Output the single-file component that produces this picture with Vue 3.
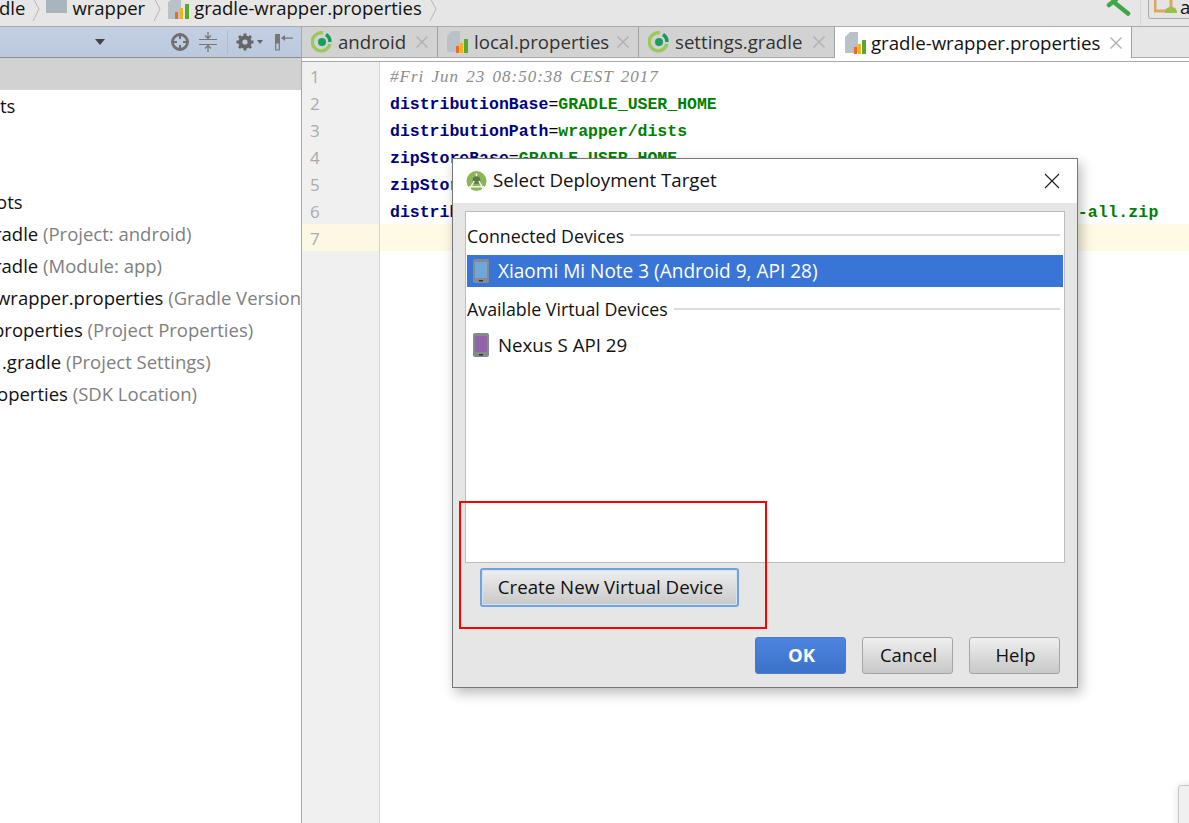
<script setup>
const tabs = [
  { name: 'android', icon: 'gradle', w: 136 },
  { name: 'local.properties', icon: 'props', w: 201 },
  { name: 'settings.gradle', icon: 'gradle', w: 196 },
  { name: 'gradle-wrapper.properties', icon: 'props', w: 297, active: true }
]
const tree = [
  { t: 'ts', off: 0 }, { t: '', off: 0 }, { t: '', off: 0 },
  { t: 'ots', off: -4 },
  { t: 'radle', h: '(Project: android)', off: -6 },
  { t: 'radle', h: '(Module: app)', off: -6 },
  { t: 'wrapper.properties', h: '(Gradle Version)', off: -4 },
  { t: 'properties', h: '(Project Properties)', off: -7 },
  { t: '.gradle', h: '(Project Settings)', off: 2 },
  { t: 'operties', h: '(SDK Location)', off: -3 }
]
const code = [
  [{ c: 'cm', t: '#Fri Jun 23 08:50:38 CEST 2017' }],
  [{ c: 'k', t: 'distributionBase' }, { c: 'e', t: '=' }, { c: 'v', t: 'GRADLE_USER_HOME' }],
  [{ c: 'k', t: 'distributionPath' }, { c: 'e', t: '=' }, { c: 'v', t: 'wrapper/dists' }],
  [{ c: 'k', t: 'zipStoreBase' }, { c: 'e', t: '=' }, { c: 'v', t: 'GRADLE_USER_HOME' }],
  [{ c: 'k', t: 'zipStorePath' }, { c: 'e', t: '=' }, { c: 'v', t: 'wrapper/dists' }],
  [{ c: 'k', t: 'distributionUrl' }, { c: 'e', t: '=' }, { c: 'v url', t: 'https\\://services.gradle.org/distributions/gradle-4.10' }, { c: 'v tail', t: '-all.zip' }],
  []
]
</script>

<template>
  <div class="app">
    <header class="crumbs">
      <span class="crumb clip">dle</span>
      <svg class="chev c1" width="9" height="24" viewBox="0 0 9 24"><path d="M1 0l6 11-6 12" fill="none" stroke="#b5b5b5"/></svg>
      <svg class="folder" width="21" height="16" viewBox="0 0 21 16"><path d="M0 0h21v16H0z" fill="#aab4bd"/></svg>
      <span class="crumb">wrapper</span>
      <svg class="chev c2" width="9" height="24" viewBox="0 0 9 24"><path d="M1 0l6 11-6 12" fill="none" stroke="#b5b5b5"/></svg>
      <svg class="pi" width="22" height="21" viewBox="0 0 22 21">
        <path d="M0 3l4-3h9v20H0z" fill="#b9c2c9"/><path d="M7 13h3v7H7z" fill="#ee6c1f"/><path d="M12 9h3v11h-3z" fill="#f4b41e"/><path d="M17 5h4v15h-4z" fill="#5aa82d"/>
      </svg>
      <span class="crumb">gradle-wrapper.properties</span>
      <svg class="chev c1" width="9" height="24" viewBox="0 0 9 24"><path d="M1 0l6 11-6 12" fill="none" stroke="#b5b5b5"/></svg>
      <div class="crumbs-right">
        <svg width="26" height="18" viewBox="0 0 26 18"><path d="M10 3l13 10.500" fill="none" stroke="#3fa74a" stroke-width="4.500" stroke-linecap="round"/><path d="M4 5l7-5.500" fill="none" stroke="#3fa74a" stroke-width="4.500" stroke-linecap="round"/></svg>
        <i class="vsep"></i>
        <div class="run-config">
          <svg width="24" height="14" viewBox="0 0 24 14"><path d="M1 -2h16v13H1z" fill="none" stroke="#dca660" stroke-width="3"/><path d="M11 13c0-4 2-6 6-6s6 2 6 6z" fill="#9bbf4d"/></svg>
          <span>a</span>
        </div>
      </div>
    </header>

    <main class="workspace">
      <aside class="project">
        <div class="tool-header">
          <span class="tri"></span>
          <svg width="20" height="20" viewBox="0 0 20 20" class="ti1"><circle cx="10" cy="10" r="7.5" fill="none" stroke="#707070" stroke-width="2.8"/><path d="M10 1v6M10 13v6M1 10h6M13 10h6" stroke="#707070" stroke-width="2"/></svg>
          <svg width="18" height="20" viewBox="0 0 18 20" class="ti2"><path d="M0 7.5h18M0 12.5h18" stroke="#777"/><path d="M9 0v6M9 14v6M6 3.5l3 3 3-3M6 16.5l3-3 3 3" stroke="#777" fill="none" stroke-width="1.3"/></svg>
          <i class="hsep"></i>
          <svg width="20" height="20" viewBox="0 0 20 20" class="ti3"><circle cx="10" cy="10" r="4.6" fill="none" stroke="#666" stroke-width="4"/><path d="M10 1.5v3M10 15.5v3M1.5 10h3M15.5 10h3M4 4l2 2M14 14l2 2M16 4l-2 2M6 14l-2 2" stroke="#666" stroke-width="3"/></svg>
          <span class="tri small"></span>
          <svg width="18" height="18" viewBox="0 0 18 18" class="ti4"><path d="M0 1h5v9H0z" fill="#777"/><path d="M.7 10h3.600v7H.7z" fill="none" stroke="#777" stroke-width="1.2"/><path d="M9 4.400h9v1.300H9zM6 5l4-3v6z" fill="#777"/></svg>
        </div>
        <div class="tree">
          <div class="tree-sel"></div>
          <div v-for="(r, i) in tree" :key="i" class="tree-row"><span :style="{ marginLeft: r.off + 'px' }">{{ r.t }}</span> <span v-if="r.h" class="hint">{{ r.h }}</span></div>
        </div>
      </aside>

      <section class="editor">
        <nav class="tabs">
          <div v-for="t in tabs" :key="t.name" class="tab" :class="{ active: t.active }" :style="{ width: t.w + 'px' }">
            <svg v-if="t.icon === 'gradle'" width="22" height="24" viewBox="0 0 22 24">
              <path d="M15 4.500A9 9 0 0 1 19 12" fill="none" stroke="#159a5a" stroke-width="3.400"/>
              <path d="M19 14A9 9 0 1 1 12 3" fill="none" stroke="#9ac95a" stroke-width="3.400"/>
              <circle cx="11" cy="12" r="4" fill="#17a05c"/>
            </svg>
            <svg v-else width="22" height="24" viewBox="0 0 22 24">
              <path d="M0 6l5-5h8v21H0z" fill="#b9c2c9"/><path d="M9 16h3v7H9z" fill="#ee6c1f"/><path d="M13 13h3v10h-3z" fill="#f4b41e"/><path d="M17 9h4v14h-4z" fill="#5aa82d"/>
            </svg>
            <span class="tab-name">{{ t.name }}</span>
            <svg class="x" width="14" height="14" viewBox="0 0 14 14"><path d="M1.500 1.500l11 11M12.500 1.500l-11 11" stroke="#b0b0b0" stroke-width="1.400"/></svg>
          </div>
        </nav>
        <div class="tab-rule"></div>
        <div class="code">
          <div v-for="(line, i) in code" :key="i" class="line" :class="{ current: i === 6 }">
            <span class="num">{{ i + 1 }}</span>
            <span class="src"><span v-for="(s, j) in line" :key="j" :class="s.c">{{ s.t }}</span></span>
          </div>
          <div class="gutter-fill"><i></i></div>
        </div>
      </section>
    </main>

    <div class="stub-window"></div>

    <div class="dialog">
      <div class="dlg-title">
        <svg width="21" height="22" viewBox="0 0 22 22">
          <circle cx="11" cy="11" r="10.500" fill="#8cb654"/>
          <path d="M7 10a4 4 0 0 1 8 0v4H7z" fill="#5c7a48"/>
          <path d="M3.500 20l5-9M18.500 20l-5-9M11 3v3M3 17h16" stroke="#f4f4f4" stroke-width="1.600" fill="none"/>
        </svg>
        <span>Select Deployment Target</span>
        <svg class="dlg-close" width="16" height="16" viewBox="0 0 16 16"><path d="M1 1l14 14M15 1L1 15" stroke="#222" stroke-width="1.200"/></svg>
      </div>
      <div class="dlg-body">
        <div class="list">
          <div class="group first"><span>Connected Devices</span><i></i></div>
          <div class="device selected">
            <svg width="16" height="24" viewBox="0 0 16 24"><rect width="16" height="24" rx="2" fill="#858a8e"/><rect x="2" y="3" width="12" height="16" fill="#6fa8d8"/><rect x="6" y="21" width="4" height="1.500" fill="#333"/></svg>
            <span>Xiaomi Mi Note 3 (Android 9, API 28)</span>
          </div>
          <div class="group"><span>Available Virtual Devices</span><i></i></div>
          <div class="device">
            <svg width="16" height="24" viewBox="0 0 16 24"><rect width="16" height="24" rx="2" fill="#858a8e"/><rect x="2" y="3" width="12" height="16" fill="#9163a8"/><rect x="6" y="21" width="4" height="1.500" fill="#333"/></svg>
            <span>Nexus S API 29</span>
          </div>
        </div>
        <div class="create-row"><button class="btn create">Create New Virtual Device</button></div>
        <div class="actions">
          <button class="btn primary">OK</button>
          <button class="btn">Cancel</button>
          <button class="btn">Help</button>
        </div>
      </div>
    </div>

    <div class="callout"></div>
  </div>
</template>

<style>
html, body { margin: 0; background: #fff; overflow: hidden; }
</style>

<style scoped>
.app {
  position: relative;
  width: 1189px;
  height: 823px;
  overflow: hidden;
  display: flex;
  flex-direction: column;
  background: #fff;
  color: #111;
  font-family: "Open Sans", "Noto Sans", sans-serif;
  font-size: 18.5px;
}
.crumbs {
  height: 26px;
  flex: none;
  display: flex;
  align-items: center;
  background: #e6e6e6;
  border-bottom: 1px solid #ababab;
}
.crumb { line-height: 18px; position: relative; top: -5px; }
.clip { margin-left: -1px; }
.chev { margin-top: -6px; flex: none; }
.c1 { margin-left: 7px; margin-right: 5px; }
.c2 { margin-left: 8px; margin-right: 6px; }
.folder { margin: -16px 5px 0 0; flex: none; }
.pi { margin: -8px 4px 0 0; flex: none; }
.crumbs-right { margin-left: auto; display: flex; align-items: flex-start; height: 26px; }
.crumbs-right > svg { margin-right: 9px; }
.vsep { width: 1px; height: 25px; background: #d6d6d6; margin-right: 7px; }
.run-config {
  width: 60px; height: 19px; margin-right: -19px;
  border: 1px solid #aaa; border-top: 0; border-radius: 0 0 3px 3px;
  background: #e4e4e4; display: flex; gap: 2px; align-items: flex-start; padding-left: 5px;
  line-height: 14px; box-sizing: border-box;
}
.workspace { flex: 1; display: flex; min-height: 0; }
.project { width: 301px; flex: none; display: flex; flex-direction: column; border-right: 1px solid #a9a9a9; }
.tool-header {
  height: 30px; flex: none; display: flex; align-items: center; position: relative;
  background: linear-gradient(#c3cfe2, #bcc9dc);
  border-bottom: 1px solid #8e8e8e;
}
.tri { width: 0; height: 0; border: 5px solid transparent; border-top: 6px solid #444; border-bottom: 0; margin-left: 95px; }
.tri.small { border-width: 3px; border-top: 4px solid #666; border-bottom: 0; margin-left: 2px; }
.ti1 { margin-left: 65px; }
.ti2 { margin-left: 9px; }
.hsep { width: 1px; height: 24px; background: #b0bccd; margin: 0 7px 0 10px; }
.ti4 { margin-left: 12px; }
.tree { position: relative; padding-top: 32px; }
.tree-sel { position: absolute; top: 0; left: 0; right: 0; height: 32px; background: #d2d2d2; }
.tree-row { height: 32px; line-height: 31px; white-space: nowrap; overflow: hidden; }
.hint { color: #808080; }
.editor { flex: 1; min-width: 0; display: flex; flex-direction: column; }
.tabs { height: 30px; flex: none; display: flex; background: #e6e6e6; border-bottom: 1px solid #a9a9a9; }
.tab {
  box-sizing: border-box; height: 30px; flex: none; display: flex; align-items: center; gap: 5px;
  padding-left: 9px; background: #d2d2d2; border-right: 1px solid #a0a0a0; color: #333;
}
.tab.active { background: #fff; height: 31px; color: #111; padding-left: 10px; gap: 4px; }
.tab-name { white-space: nowrap; line-height: 20px; font-size: 18.65px; }
.x { margin-left: auto; margin-right: 8px; }
.tab-rule { height: 3px; flex: none; border-bottom: 1px solid #a9a9a9; background: #fff; }
.code { flex: 1; display: flex; flex-direction: column; font-family: "Liberation Mono", monospace; font-size: 16.5px; min-height: 0; }
.line { height: 27px; flex: none; display: flex; line-height: 32px; white-space: nowrap; }
.num {
  width: 78px; flex: none; box-sizing: border-box; padding-left: 8px; background: #f0f0f0;
  border-right: 1px solid #d4d4d4; color: #aaa; font-family: "Open Sans", sans-serif; font-size: 17px; font-weight: 400;
  line-height: 29px; height: 27px;
}
.src { padding-left: 10px; }
.current { background: #fffae3; }
.current .num { background: #fdf8e4; }
.cm { color: #8c8c8c; font-style: italic; font-family: "Liberation Serif", serif; font-size: 17px; letter-spacing: 1px; word-spacing: 2px; line-height: 30px; }
.k { color: #000080; font-weight: 700; }
.e { color: #000; }
.v { color: #008000; font-weight: 700; }
.url { letter-spacing: -0.1px; }
.tail { letter-spacing: 0.2px; }
.gutter-fill { flex: 1; }
.gutter-fill i { display: block; box-sizing: border-box; width: 78px; height: 100%; background: #f0f0f0; border-right: 1px solid #d4d4d4; }
.stub-window {
  position: absolute; left: 1178px; top: 785px; width: 40px; height: 60px;
  border: 1px solid #c8c8c8; border-radius: 3px; background: #f0f0f0; box-shadow: 0 0 8px rgba(0,0,0,.12);
}
.dialog {
  position: absolute; left: 452px; top: 158px; width: 626px; height: 530px; box-sizing: border-box;
  border: 1px solid #777; background: #e6e6e6; box-shadow: 3px 5px 12px rgba(0,0,0,.28);
  display: flex; flex-direction: column;
}
.dlg-title {
  height: 44px; flex: none; background: #fff; display: flex; align-items: center; gap: 6px; padding-left: 13px;
  color: #111; position: relative; line-height: 20px; font-size: 18.7px;
}
.dlg-title > span { position: relative; top: -1px; }
.dlg-close { position: absolute; right: 17px; top: 14px; }
.dlg-body { flex: 1; display: flex; flex-direction: column; padding: 8px 12px 13px; min-height: 0; }
.list {
  height: 352px; flex: none; box-sizing: border-box; border: 1px solid #bdbdbd; background: #fff;
  padding: 1px 1px 0 1px;
}
.group { height: 42px; display: flex; align-items: center; gap: 6px; line-height: 24px; padding-top: 1px; box-sizing: border-box; font-size: 17.8px; }
.group.first { padding-top: 4px; }
.group.first i { margin-bottom: 2px; }
.group i { flex: 1; height: 2px; background: #dcdcdc; margin-right: 3px; }
.device { height: 32px; display: flex; align-items: center; gap: 9px; padding-left: 6px; font-size: 18.7px; }
.device > span { line-height: 24px; }
.device.selected { background: #3875d7; color: #fff; font-size: 19.05px; }
.create-row { padding: 5px 0 0 15px; }
.btn {
  box-sizing: border-box; width: 91px; height: 37px; padding: 0 0 2px 2px; font: inherit; color: #111;
  border: 1px solid #a5a5a5; border-radius: 3px; background: linear-gradient(#efefef, #c8c8c8);
}
.create { width: 259px; height: 39px; padding-bottom: 3px; font-size: 18.7px; border: 2px solid #6ea3e0; box-shadow: inset 0 0 0 1px #d6e2f0; }
.actions { margin-top: auto; display: flex; justify-content: flex-end; gap: 16px; padding-right: 5px; }
.primary { background: linear-gradient(#4c84e0, #3c72c8); border-color: #4a7ac5; color: #fff; font-weight: 700; }
.callout {
  position: absolute; left: 459px; top: 501px; width: 308px; height: 128px; box-sizing: border-box;
  border: 2px solid #f00; pointer-events: none;
}
</style>
